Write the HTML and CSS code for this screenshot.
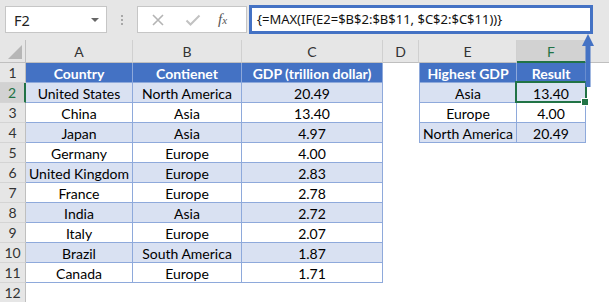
FILE: index.html
```html
<!DOCTYPE html>
<html lang="en">
<head>
  <meta charset="UTF-8">
  <meta name="viewport" content="width=device-width, initial-scale=1.0">
  <title>MAX IF array formula</title>
  <link rel="stylesheet" href="styles.css">
</head>
<body>
  <div class="app">
    <!-- formula bar -->
    <div class="toolbar">
      <div class="name-box">
        <span>F2</span>
        <span class="caret"></span>
      </div>
      <div class="grip"><i></i><i></i><i></i></div>
      <div class="buttons">
        <svg class="btn-x" width="14" height="14" viewBox="0 0 14 14">
          <path d="M2 2 L12 12 M12 2 L2 12" stroke="#b4b4b4" stroke-width="1.6" fill="none"/>
        </svg>
        <svg class="btn-ok" width="16" height="14" viewBox="0 0 16 14">
          <path d="M1.5 7.5 L5.5 11.5 L14.5 2.5" stroke="#c2c2c2" stroke-width="2" fill="none"/>
        </svg>
        <span class="btn-fx">f<small>x</small></span>
      </div>
      <div class="formula">{=MAX(IF(E2=$B$2:$B$11, $C$2:$C$11))}</div>
    </div>

    <!-- sheet -->
    <div class="sheet">
      <div class="corner"><span class="corner-tri"></span></div>
      <div class="col-head">A</div>
      <div class="col-head">B</div>
      <div class="col-head">C</div>
      <div class="col-head">D</div>
      <div class="col-head">E</div>
      <div class="col-head active">F</div>
      <div class="col-head last"></div>

      <div class="row-head">1</div>
      <div class="cell th">Country</div>
      <div class="cell th">Contienet</div>
      <div class="cell th">GDP (trillion dollar)</div>
      <div class="cell"></div>
      <div class="cell th first">Highest GDP</div>
      <div class="cell th">Result</div>
      <div class="cell"></div>

      <div class="row-head active">2</div>
      <div class="cell td band">United States</div>
      <div class="cell td band">North America</div>
      <div class="cell td band">20.49</div>
      <div class="cell"></div>
      <div class="cell td band first">Asia</div>
      <div class="cell td band selected">13.40</div>
      <div class="cell"></div>

      <div class="row-head">3</div>
      <div class="cell td">China</div>
      <div class="cell td">Asia</div>
      <div class="cell td">13.40</div>
      <div class="cell"></div>
      <div class="cell td first">Europe</div>
      <div class="cell td">4.00</div>
      <div class="cell"></div>

      <div class="row-head">4</div>
      <div class="cell td band">Japan</div>
      <div class="cell td band">Asia</div>
      <div class="cell td band">4.97</div>
      <div class="cell"></div>
      <div class="cell td band first">North America</div>
      <div class="cell td band">20.49</div>
      <div class="cell"></div>

      <div class="row-head">5</div>
      <div class="cell td">Germany</div>
      <div class="cell td">Europe</div>
      <div class="cell td">4.00</div>
      <div class="cell wide"></div>

      <div class="row-head">6</div>
      <div class="cell td band">United Kingdom</div>
      <div class="cell td band">Europe</div>
      <div class="cell td band">2.83</div>
      <div class="cell wide"></div>

      <div class="row-head">7</div>
      <div class="cell td">France</div>
      <div class="cell td">Europe</div>
      <div class="cell td">2.78</div>
      <div class="cell wide"></div>

      <div class="row-head">8</div>
      <div class="cell td band">India</div>
      <div class="cell td band">Asia</div>
      <div class="cell td band">2.72</div>
      <div class="cell wide"></div>

      <div class="row-head">9</div>
      <div class="cell td">Italy</div>
      <div class="cell td">Europe</div>
      <div class="cell td">2.07</div>
      <div class="cell wide"></div>

      <div class="row-head">10</div>
      <div class="cell td band">Brazil</div>
      <div class="cell td band">South America</div>
      <div class="cell td band">1.87</div>
      <div class="cell wide"></div>

      <div class="row-head">11</div>
      <div class="cell td">Canada</div>
      <div class="cell td">Europe</div>
      <div class="cell td">1.71</div>
      <div class="cell wide"></div>

      <div class="row-head">12</div>
      <div class="cell full"></div>
    </div>

    <!-- annotation arrow from formula to F2 -->
    <svg class="arrow" width="16" height="54" viewBox="0 0 16 54">
      <polygon points="8,0 14,12 2,12" fill="#4472c4"/>
      <rect x="5.5" y="11" width="5" height="42" fill="#4472c4"/>
    </svg>
  </div>
</body>
</html>
```

FILE: styles.css
```css
* {
  margin: 0;
  padding: 0;
  box-sizing: border-box;
}

body {
  background-color: #fff;
  font-family: Lato, "Liberation Sans", sans-serif;
  color: #000;
}

.app {
  position: relative;
  width: 609px;
  height: 302px;
  overflow: hidden;
}

/* formula bar */
.toolbar {
  height: 40px;
  background-color: #e6e6e6;
  display: flex;
  align-items: flex-start;
  padding: 6px 0 0 5px;
}

.name-box {
  width: 102px;
  height: 27px;
  background-color: #fff;
  border: 1px solid #c6c6c6;
  display: flex;
  align-items: center;
  justify-content: space-between;
  padding: 0 7px 0 8px;
  font-family: "Noto Sans", sans-serif;
  font-size: 14.5px;
  color: #222;
}

.caret {
  width: 0;
  height: 0;
  border-left: 4px solid transparent;
  border-right: 4px solid transparent;
  border-top: 4px solid #666;
}

.grip {
  width: 30px;
  height: 27px;
  display: flex;
  flex-direction: column;
  align-items: center;
  justify-content: center;
  gap: 2px;
}

.grip i {
  width: 2px;
  height: 2px;
  background-color: #a8a8a8;
}

.buttons {
  width: 110px;
  height: 27px;
  background-color: #fff;
  border: 1px solid #c6c6c6;
  display: flex;
  align-items: center;
  padding-left: 13px;
}

.btn-x {
  margin-right: 20px;
}

.btn-ok {
  margin-right: 17px;
}

.btn-fx {
  font-family: "Liberation Serif", serif;
  font-style: italic;
  font-size: 15px;
  color: #555;
}

.btn-fx small {
  font-size: 11px;
}

.formula {
  margin-left: 2px;
  margin-top: -1px;
  width: 344px;
  height: 29px;
  background-color: #fff;
  border: 3px solid #4472c4;
  padding-left: 5px;
  font-family: "Noto Sans", sans-serif;
  font-size: 13px;
  line-height: 22px;
  color: #111;
  white-space: nowrap;
}

/* sheet grid */
.sheet {
  display: grid;
  grid-template-columns: 26px 107px 109px 141px 36px 98px 69px 1fr;
  grid-template-rows: 23px;
  grid-auto-rows: 20px;
  font-size: 14px;
}

.corner,
.col-head,
.row-head {
  background-color: #e6e6e6;
  color: #333;
}

.corner {
  position: relative;
  border-right: 1px solid #bfbfbf;
  border-bottom: 1px solid #bfbfbf;
}

.corner-tri {
  position: absolute;
  right: 3px;
  bottom: 3px;
  width: 0;
  height: 0;
  border-left: 14px solid transparent;
  border-bottom: 14px solid #b6b6b6;
}

.col-head {
  display: flex;
  align-items: center;
  justify-content: center;
  border-right: 1px solid #d0d0d0;
  border-bottom: 1px solid #bfbfbf;
  padding-top: 1px;
}

.col-head.last {
  border-right: none;
}

.col-head.active {
  background-color: #d2d2d2;
  color: #217346;
  border-bottom: 2px solid #217346;
}

.row-head {
  display: flex;
  align-items: center;
  justify-content: center;
  border-right: 1px solid #bfbfbf;
  border-bottom: 1px solid #d4d4d4;
}

.row-head.active {
  background-color: #d2d2d2;
  color: #217346;
  border-right: 2px solid #217346;
}

.cell {
  display: flex;
  align-items: center;
  justify-content: center;
  white-space: nowrap;
  padding-top: 1px;
}

.cell.wide {
  grid-column: span 4;
}

.cell.full {
  grid-column: span 7;
}

.th,
.td {
  border-right: 1px solid #8ea9db;
  border-bottom: 1px solid #8ea9db;
}

.th {
  background-color: #4472c4;
  color: #fff;
  font-weight: bold;
}

.td.band {
  background-color: #d9e1f2;
}

.first {
  border-left: 1px solid #8ea9db;
}

.selected {
  position: relative;
}

.selected::after {
  content: "";
  position: absolute;
  left: -2px;
  top: -2px;
  right: -2px;
  bottom: -1px;
  border: 2px solid #217346;
}

.selected::before {
  content: "";
  position: absolute;
  right: -4px;
  bottom: -4px;
  width: 6px;
  height: 6px;
  background-color: #217346;
  border: 1px solid #fff;
  z-index: 1;
}

.arrow {
  position: absolute;
  left: 580px;
  top: 34px;
}
```
